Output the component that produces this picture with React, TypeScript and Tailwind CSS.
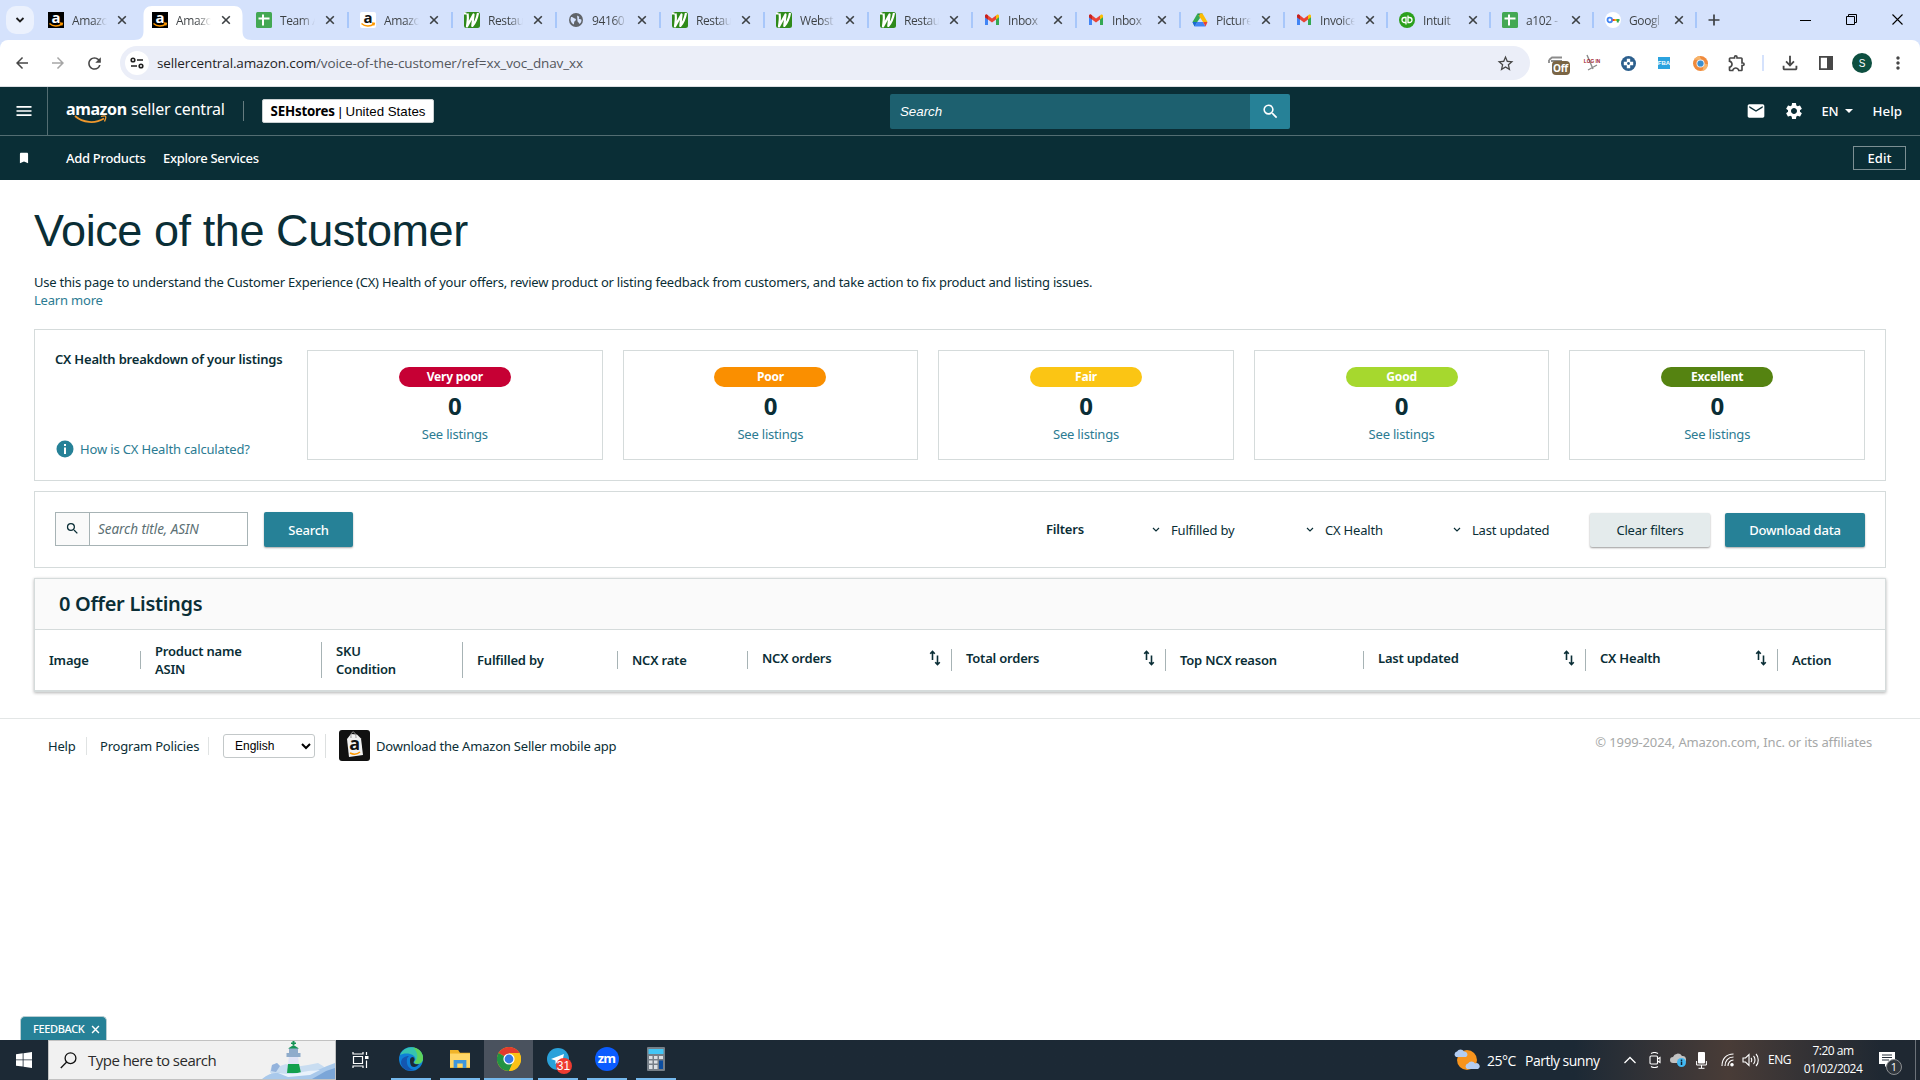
import type { ReactNode } from "react";
import { MdArrowBack, MdArrowForward, MdBookmark, MdEmail, MdMenu, MdMoreVert, MdOutlineExtension, MdOutlineFileDownload, MdRefresh, MdSearch, MdSettings, MdStarBorder } from "react-icons/md";

type TabIcon = "seller" | "amazon" | "sheets" | "web" | "globe" | "gmail" | "drive" | "qb" | "google";

const tabs: { icon: TabIcon; title: string; active?: boolean; narrow?: boolean }[] = [
    { icon: "seller", title: "Amazo" },
    { icon: "seller", title: "Amazo", active: true },
    { icon: "sheets", title: "Team A" },
    { icon: "amazon", title: "Amazo" },
    { icon: "web", title: "Restau" },
    { icon: "globe", title: "94160" },
    { icon: "web", title: "Restau" },
    { icon: "web", title: "Webst" },
    { icon: "web", title: "Restau" },
    { icon: "gmail", title: "Inbox" },
    { icon: "gmail", title: "Inbox" },
    { icon: "drive", title: "Picture" },
    { icon: "gmail", title: "Invoice", narrow: true },
    { icon: "qb", title: "Intuit", narrow: true },
    { icon: "sheets", title: "a102 -", narrow: true },
    { icon: "google", title: "Googl", narrow: true }
];

const ratings = [
    { label: "Very poor", color: "bg-[#c60034]" },
    { label: "Poor", color: "bg-[#fa8f00]" },
    { label: "Fair", color: "bg-[#fbc514]" },
    { label: "Good", color: "bg-[#a6d82e]" },
    { label: "Excellent", color: "bg-[#558311]" }
];

const columns: { lines: string[]; width: string; sort?: boolean }[] = [
    { lines: ["Image"], width: "w-[106px]" },
    { lines: ["Product name", "ASIN"], width: "w-[181px]" },
    { lines: ["SKU", "Condition"], width: "w-[141px]" },
    { lines: ["Fulfilled by"], width: "w-[155px]" },
    { lines: ["NCX rate"], width: "w-[130px]" },
    { lines: ["NCX orders"], width: "w-[204px]", sort: true },
    { lines: ["Total orders"], width: "w-[214px]", sort: true },
    { lines: ["Top NCX reason"], width: "w-[198px]" },
    { lines: ["Last updated"], width: "w-[222px]", sort: true },
    { lines: ["CX Health"], width: "w-[192px]", sort: true },
    { lines: ["Action"], width: "w-[107px]" }
];

function Favicon({ icon }: { icon: TabIcon }) {
    if (icon === "seller" || icon === "amazon") {
        const dark = icon === "seller";
        return (
            <svg viewBox="0 0 16 16" className="size-4 shrink-0">
                <rect width="16" height="16" rx={dark ? 0 : 2} fill={dark ? "#000" : "#fff"} />
                <text x="8" y="10.5" textAnchor="middle" fontSize="15" fontWeight="700" fontFamily="Open Sans, sans-serif" fill={dark ? "#fff" : "#111"}>a</text>
                <path d="M1.500 11.500c3.500 3.200 9 3.200 12.500.3M12 11l2.300.4-.5 2" fill="none" stroke="#f90" strokeWidth="1.500" />
            </svg>
        );
    }
    if (icon === "sheets") {
        return (
            <svg viewBox="0 0 16 16" className="size-4 shrink-0">
                <rect width="16" height="16" rx="1.500" fill="#43a853" />
                <path d="M7 2.500v11M2.500 6.500h11" stroke="#fff" strokeWidth="2" />
            </svg>
        );
    }
    if (icon === "web") {
        return (
            <svg viewBox="0 0 16 16" className="size-4 shrink-0">
                <rect width="16" height="16" rx="2.500" fill="#2f8a1b" />
                <path d="M0 1.500h2.500M3.500 1.500C4.500 6 3.500 10 3 14.500L9.500 2.500 8.300 14C11 11 13 6.500 14 1" fill="none" stroke="#fff" strokeWidth="2.200" strokeLinejoin="round" />
            </svg>
        );
    }
    if (icon === "globe") {
        return (
            <svg viewBox="0 0 16 16" className="size-4 shrink-0">
                <circle cx="8" cy="8" r="7" fill="#5f6368" />
                <path d="M3 5c2-.5 2.500 1 4 1.500s1 2 0 2.500-1 2-1 3.500c-2-.5-3.500-3-3.500-5zM9 2.500c0 1.500 1 1.500 2 2s-1 2 .5 2.500 1.500 0 2 1c0 2-1 3-2 4-.5-2-2-1.500-2-3" fill="#d5e2fc" />
            </svg>
        );
    }
    if (icon === "gmail") {
        return (
            <svg viewBox="0 0 16 16" className="size-4 shrink-0">
                <path d="M1 4v9h3V6.500z" fill="#4285f4" />
                <path d="M15 4v9h-3V6.500z" fill="#34a853" />
                <path d="M12 3.500v4L15 5.200V3.800c0-1.200-1.300-1.800-2.200-1.100z" fill="#fbbc04" />
                <path d="M1 3.800v1.400l3 2.300 4 3 4-3V3.400L8 6.400 3.200 2.700C2.300 2 1 2.600 1 3.800z" fill="#ea4335" />
                <path d="M1 3.800v1.400l3 2.300v-4l-.8-.8C2.300 2 1 2.600 1 3.800z" fill="#c5221f" />
            </svg>
        );
    }
    if (icon === "drive") {
        return (
            <svg viewBox="0 0 16 16" className="size-4 shrink-0">
                <path d="M5.500 1.500h5L8 6z" fill="#188038" />
                <path d="M5.500 1.500L.5 10l2 4L8 6z" fill="#34a853" />
                <path d="M10.500 1.500H8L7 4l4 6h4.500z" fill="#fbbc04" />
                <path d="M2.500 14.500L5 10h6l2.500 4.500z" fill="#4285f4" />
                <path d="M11 10h4.500l-2 4.500z" fill="#ea4335" />
                <path d="M5 10L.5 10l2 4.500z" fill="#1967d2" />
            </svg>
        );
    }
    if (icon === "qb") {
        return (
            <svg viewBox="0 0 16 16" className="size-4 shrink-0">
                <circle cx="8" cy="8" r="8" fill="#2ca01c" />
                <path d="M7 10.500H5.500a2.500 2.500 0 0 1 0-5H7v7M9 5.500h1.500a2.500 2.500 0 0 1 0 5H9v-7" fill="none" stroke="#fff" strokeWidth="1.300" />
            </svg>
        );
    }
    return (
        <svg viewBox="0 0 16 16" className="size-4 shrink-0">
            <circle cx="8" cy="8" r="8" fill="#fff" />
            <circle cx="4.800" cy="8" r="2.300" fill="none" stroke="#4285f4" strokeWidth="1.800" />
            <path d="M7.500 8H11" stroke="#ea4335" strokeWidth="2" />
            <path d="M10 8h4.500M12.800 8v2.500" stroke="#34a853" strokeWidth="2" />
            <path d="M9.500 8h2" stroke="#fbbc04" strokeWidth="2" />
        </svg>
    );
}

function Cross({ className }: { className: string }) {
    return (
        <svg viewBox="0 0 10 10" className={className}>
            <path d="M1.200 1.200l7.600 7.600M8.800 1.200L1.200 8.800" stroke="currentColor" strokeWidth="1.600" />
        </svg>
    );
}

function TabStrip() {
    return (
        <div className="flex h-10 bg-[#d5e2fc]">
            <div className="mt-1.5 ml-1.5 flex h-7 w-7 shrink-0 items-center justify-center rounded-[10px] bg-[#ebf1fd]">
                <svg viewBox="0 0 10 10" className="size-2.5">
                    <path d="M1.500 3L5 6.500 8.500 3" fill="none" stroke="#1f1f1f" strokeWidth="1.800" />
                </svg>
            </div>
            <div className="ml-1.5 flex">
                {tabs.map((tab, index) => (
                    <div key={index} className={`relative flex h-10 items-center pl-2 ${tab.narrow ? "w-[103px]" : "w-[104px]"}`}>
                        {tab.active && (
                            <svg viewBox="0 0 118 34" className="absolute top-1.5 -left-[10px] h-[34px] w-[118px]">
                                <path d="M0 34C7 34 9.500 31 9.500 25V9C9.500 3 13 0 18 0h82c5 0 8.500 3 8.500 9v16c0 6 2.500 9 9.500 9z" fill="#fff" />
                            </svg>
                        )}
                        <div className="relative flex items-center">
                            <Favicon icon={tab.icon} />
                            <span className="mt-px ml-2 w-[35px] bg-linear-to-r from-[#3c4043] from-60% to-transparent bg-clip-text font-['Open_Sans',sans-serif] text-[12px] tracking-[-0.4px] whitespace-pre text-transparent">{tab.title}</span>
                            <Cross className="ml-[10px] size-2.5 text-[#3c4043]" />
                        </div>
                        {index > 1 && <span className="absolute top-3 right-[3px] h-4 w-[2px] bg-[#a8c7fa]" />}
                    </div>
                ))}
            </div>
            <svg viewBox="0 0 12 12" className="mt-[14px] ml-[8px] size-3">
                <path d="M6 .5v11M.5 6h11" stroke="#3c4043" strokeWidth="1.700" />
            </svg>
            <div className="mt-[14px] mr-[17px] ml-auto flex items-center gap-[35px] self-start text-black">
                <svg viewBox="0 0 11 11" className="size-[11px]"><path d="M0 6.500h11" stroke="currentColor" /></svg>
                <svg viewBox="0 0 11 11" className="size-[11px]"><path d="M.5 2.500h8v8h-8zM2.500 2.500v-2h8v8h-2" fill="none" stroke="currentColor" /></svg>
                <svg viewBox="0 0 11 11" className="size-[11px]"><path d="M.5.5l10 10M10.500.5l-10 10" stroke="currentColor" strokeWidth="1.100" /></svg>
            </div>
        </div>
    );
}

function Slot({ children }: { children: ReactNode }) {
    return <div className="flex h-6 w-9 items-center justify-center">{children}</div>;
}

function Toolbar() {
    return (
        <div className="bg-[#d5e2fc]">
            <div className="flex h-[47px] items-center rounded-t-[8px] border-b border-[#dcdfe3] bg-white text-[#474747]">
                <Slot><MdArrowBack className="ml-2 size-[18px]" /></Slot>
                <Slot><MdArrowForward className="ml-2 size-[18px] text-[#a6a6a6]" /></Slot>
                <Slot><MdRefresh className="ml-2 size-[19px]" /></Slot>
                <div className="ml-3 flex h-[34px] w-[1410px] items-center rounded-full bg-[#ebeef8] pr-[15px] pl-[5px]">
                    <div className="flex size-6 items-center justify-center rounded-full bg-white">
                        <svg viewBox="0 0 14 12" className="h-3 w-3.5 text-[#1f1f1f]" fill="none" stroke="currentColor" strokeWidth="1.600">
                            <circle cx="3" cy="3" r="1.800" />
                            <path d="M7 3h6M1 9h6" />
                            <circle cx="11" cy="9" r="1.800" />
                        </svg>
                    </div>
                    <span className="ml-2 font-['Open_Sans',sans-serif] text-[13.5px] tracking-[-0.12px] text-[#1f1f1f]">
                        sellercentral.amazon.com<span className="text-[#54565c]">/voice-of-the-customer/ref=xx_voc_dnav_xx</span>
                    </span>
                    <MdStarBorder className="ml-auto size-[19px]" />
                </div>
                <div className="ml-[8px] flex items-center">
                    <Slot>
                        <div className="relative ml-[3px] h-6 w-6">
                            <svg viewBox="0 0 24 24" className="size-6">
                                <path d="M3 9l3-2.500h10M5 10h11M3 9v3" stroke="#8b8b8b" strokeWidth="1.800" fill="none" />
                            </svg>
                            <span className="absolute top-[10px] left-[6px] flex h-3.5 w-[18px] items-center justify-center rounded-[4px] bg-[#7a6545] font-['Open_Sans',sans-serif] text-[10px] font-bold tracking-tight text-white">Off</span>
                        </div>
                    </Slot>
                    <Slot>
                        <svg viewBox="0 0 18 18" className="size-[18px]">
                            <path d="M4 1l6 14M5 16l9-5" stroke="#8a8a8a" strokeWidth="1.400" />
                            <text x="9" y="9" textAnchor="middle" fontSize="4.8" fontWeight="700" fontFamily="Liberation Sans, sans-serif" fill="#a0202a">LOG IN</text>
                        </svg>
                    </Slot>
                    <Slot>
                        <svg viewBox="0 0 16 16" className="size-[15px]">
                            <circle cx="8" cy="8" r="8" fill="#2c5f8d" />
                            <path d="M6.200 3h3.600v3.200H13v3.600H9.800V13H6.200V9.800H3V6.200h3.200z" fill="#fff" />
                            <circle cx="8" cy="8" r="1.500" fill="#2c5f8d" />
                        </svg>
                    </Slot>
                    <Slot>
                        <div className="flex size-3 items-center justify-center bg-[#2ba3df] font-['Liberation_Sans',sans-serif] text-[6px] font-bold text-white">FBA</div>
                    </Slot>
                    <Slot>
                        <svg viewBox="0 0 16 16" className="size-[15px]">
                            <circle cx="8" cy="8" r="8" fill="#f08a3c" />
                            <path d="M1 4a8 8 0 0 1 6-4l2 4zM10 16a8 8 0 0 0 6-7l-4-1z" fill="#f7b46a" />
                            <circle cx="8" cy="8" r="4.300" fill="#e8eef6" />
                            <circle cx="8" cy="8" r="3.300" fill="#3a8fd0" />
                        </svg>
                    </Slot>
                    <Slot><MdOutlineExtension className="ml-px size-5" /></Slot>
                    <div className="mx-2 h-4 w-0.5 bg-[#d5e2fc]" />
                    <Slot><MdOutlineFileDownload className="size-[22px]" /></Slot>
                    <Slot>
                        <svg viewBox="0 0 16 16" className="size-4">
                            <path d="M1.900 1.900h12.200v12.200H1.900z" fill="none" stroke="currentColor" strokeWidth="1.800" />
                            <path d="M9 2h5v12H9z" fill="currentColor" />
                        </svg>
                    </Slot>
                    <Slot>
                        <div className="flex size-5 items-center justify-center rounded-full bg-[#0d4f40] font-['Liberation_Sans',sans-serif] text-[10px] text-white">S</div>
                    </Slot>
                    <Slot><MdMoreVert className="size-5" /></Slot>
                </div>
            </div>
        </div>
    );
}

function SellerHeader() {
    return (
        <header className="bg-[#0a2e36] font-['Noto_Sans',sans-serif] text-[13px] font-medium text-white">
            <div className="flex h-[49px] items-center border-b border-[#536d72]">
                <div className="flex h-full w-12 items-center justify-center border-r border-[#536d72]">
                    <MdMenu className="size-5" />
                </div>
                <div className="relative ml-[18px] flex h-[26px] w-[160px] items-start text-[16px] leading-[22px] whitespace-nowrap">
                    <span className="w-[65px] font-bold tracking-[-0.4px]">amazon</span>
                    <span className="font-normal tracking-[-0.2px]">seller central</span>
                    <svg viewBox="0 0 36 9" className="absolute top-[17px] left-[8px] h-[9px] w-9">
                        <path d="M1 1c8 7 20 8 29 2.500" fill="none" stroke="#f0982d" strokeWidth="1.800" />
                        <path d="M27 1.500c5-1.500 6-.5 3.500 5" fill="none" stroke="#f0982d" strokeWidth="1.300" />
                    </svg>
                </div>
                <div className="ml-[17px] h-5 w-px bg-[#667c80]" />
                <div className="ml-[18px] flex h-6 w-[172px] items-center justify-center rounded-[2px] border border-[#c9d0d2] bg-white pt-px font-['Liberation_Sans',sans-serif] text-[13.3px] whitespace-pre text-black">
                    <b className="font-['Noto_Sans',sans-serif] text-[13.3px] font-bold tracking-[-0.2px]">SEHstores</b> | United States
                </div>
                <div className="ml-[456px] flex h-[35px] w-[400px]">
                    <div className="flex flex-1 items-center rounded-l-[2px] bg-[#1d606f] pt-px pl-2.5 font-['Liberation_Sans',sans-serif] text-[13.3px] italic">Search</div>
                    <div className="flex w-10 items-center justify-center rounded-r-[2px] bg-[#268197]"><MdSearch className="size-[19px]" /></div>
                </div>
                <div className="mr-[18px] ml-auto flex items-center">
                    <MdEmail className="size-5" />
                    <MdSettings className="ml-[18px] size-5" />
                    <span className="mt-0.5 ml-[18px] w-[19px] tracking-[-0.3px]">EN</span>
                    <svg viewBox="0 0 8 4" className="ml-[4px] h-1 w-2"><path d="M0 0h8L4 4z" fill="currentColor" /></svg>
                    <span className="mt-0.5 ml-[20px] text-[13.3px]">Help</span>
                </div>
            </div>
            <div className="flex h-[44px] items-center">
                <MdBookmark className="ml-[17px] size-3.5" />
                <span className="mt-0.5 ml-[35px] w-[97px] tracking-[-0.3px]">Add Products</span>
                <span className="mt-0.5 tracking-[-0.3px]">Explore Services</span>
                <div className="mr-3.5 ml-auto flex h-6 w-[53px] items-center justify-center border border-[#7c8f93] pt-0.5">Edit</div>
            </div>
        </header>
    );
}

function FilterItem({ label, width }: { label: string; width: string }) {
    return (
        <div className={`flex items-center ${width}`}>
            <svg viewBox="0 0 8 6" className="h-1.5 w-2"><path d="M1 1l3 3 3-3" fill="none" stroke="#0a2e36" strokeWidth="1.200" /></svg>
            <span className="ml-[11px]">{label}</span>
        </div>
    );
}

function SortIcon() {
    return (
        <svg viewBox="0 0 12 16" className="h-4 w-3 shrink-0" fill="none" stroke="#0a2e36" strokeWidth="1.600">
            <path d="M3.500 10V2M1.200 3.800l2.300-2.300 2.300 2.300M8.500 5.500v9M6.200 12.200l2.300 2.300 2.300-2.300" />
        </svg>
    );
}

function VoiceOfCustomer() {
    return (
        <main className="px-[34px] pt-[27px] font-['Noto_Sans',sans-serif] text-[13px] leading-[18px] tracking-[-0.2px] text-[#0a2e36]">
            <h1 className="font-['Liberation_Sans',sans-serif] text-[45px] leading-[48px] tracking-[-0.43px]">Voice of the Customer</h1>
            <p className="mt-[18px] tracking-[-0.223px]">Use this page to understand the Customer Experience (CX) Health of your offers, review product or listing feedback from customers, and take action to fix product and listing issues.</p>
            <p className="text-[#2b7b92]">Learn more</p>

            <section className="mt-5 flex h-[152px] border border-[#d5dbdb] pt-5 pr-5 pl-5">
                <div className="flex h-[110px] w-[252px] flex-col justify-between">
                    <h2 className="font-semibold">CX Health breakdown of your listings</h2>
                    <div className="mb-[2px] flex items-center text-[#2b7b92]">
                        <svg viewBox="0 0 18 18" className="ml-[1px] size-[18px]">
                            <circle cx="9" cy="9" r="8.500" fill="#268197" />
                            <path d="M9 4v2M9 7.500V14" stroke="#fff" strokeWidth="2" />
                        </svg>
                        <span className="ml-[6px] tracking-[-0.16px]">How is CX Health calculated?</span>
                    </div>
                </div>
                <div className="grid flex-1 grid-cols-5 gap-5">
                    {ratings.map((rating) => (
                        <div key={rating.label} className="flex h-[110px] flex-col items-center border border-[#d5dbdb] pt-4">
                            <span className={`flex h-5 w-28 items-center justify-center rounded-full text-[12px] font-bold text-white ${rating.color}`}>{rating.label}</span>
                            <span className="mt-[5px] text-[24px] leading-7 font-bold">0</span>
                            <span className="mt-[5px] text-[#2b7b92]">See listings</span>
                        </div>
                    ))}
                </div>
            </section>

            <section className="mt-[10px] flex h-[77px] items-start border border-[#d5dbdb] px-5 pt-5">
                <div className="flex h-[34px] w-[193px] border border-[#a7b3b5]">
                    <div className="flex w-[34px] items-center justify-center border-r border-[#a7b3b5] bg-[#fafafa]"><MdSearch className="mb-0.5 size-[15px]" /></div>
                    <span className="flex items-center pl-2 text-[13.5px] tracking-[-0.05px] text-[#5b6f73] italic">Search title, ASIN</span>
                </div>
                <div className="ml-4 flex h-[35px] w-[89px] items-center justify-center rounded-[2px] bg-[#268197] font-medium text-white shadow-[0_1px_2px_rgba(0,0,0,0.35)]">Search</div>
                <div className="ml-auto flex h-9 items-center">
                    <span className="mb-[3px] w-[106px] font-semibold">Filters</span>
                    <FilterItem label="Fulfilled by" width="w-[154px]" />
                    <FilterItem label="CX Health" width="w-[147px]" />
                    <FilterItem label="Last updated" width="w-[137px]" />
                    <div className="flex h-[34px] w-[120px] items-center justify-center rounded-[2px] bg-[#e4ebec] shadow-[0_1px_2px_rgba(0,0,0,0.4)]">Clear filters</div>
                    <div className="ml-[15px] flex h-[34px] w-[140px] items-center justify-center rounded-[2px] bg-[#268197] font-medium text-white shadow-[0_1px_2px_rgba(0,0,0,0.35)]">Download data</div>
                </div>
            </section>

            <section className="mt-[10px] border border-b-2 border-[#d5dbdb] shadow-[0_1px_3px_rgba(0,0,0,0.3)]">
                <h2 className="flex h-[51px] items-center border-b border-[#d5dbdb] bg-[#fafafa] pl-6 text-[20px] font-semibold tracking-[-0.3px]">0 Offer Listings</h2>
                <div className="flex h-[60px] items-center pb-px font-semibold">
                    {columns.map((column, index) => (
                        <div key={column.lines[0]} className={`flex shrink-0 items-center pl-[14px] ${column.width} ${column.sort ? "h-[22px] pr-[10px]" : ""} ${index < columns.length - 1 ? "border-r border-[#a7b3b5]" : ""}`}>
                            <div className={column.sort ? "pb-1" : ""}>
                                {column.lines.map((line) => <div key={line}>{line}</div>)}
                            </div>
                            {column.sort && <div className="ml-auto pb-1"><SortIcon /></div>}
                        </div>
                    ))}
                </div>
            </section>
        </main>
    );
}

function Footer() {
    return (
        <footer className="mt-[26px] flex h-[60px] items-start border-t border-[#e3e6e6] pr-12 pl-12 font-['Noto_Sans',sans-serif] text-[13px] leading-[18px] tracking-[-0.2px] text-[#0a2e36]">
            <div className="flex h-[53px] items-center">
                <span className="w-[38px]">Help</span>
                <span className="flex h-[18px] w-[123px] items-center border-x border-[#e0e3e3] pl-[13px]">Program Policies</span>
                <select className="ml-[14px] h-6 w-[92px] rounded-[3px] border border-[#c3c8c9] bg-white pl-[7px] font-['Liberation_Sans',sans-serif] text-[12px] tracking-normal text-black">
                    <option>English</option>
                </select>
                <span className="ml-[10px] h-6 w-px bg-[#dde0e0]" />
                <svg viewBox="0 0 31 31" className="ml-[13px] size-[31px]">
                    <rect width="31" height="31" rx="3" fill="#111" />
                    <path d="M8 9l4-5 6 .5 4 4L24 25 10 27z" fill="#f2f2f2" />
                    <path d="M12 8c-1-8 5-8 5 0" fill="none" stroke="#999" />
                    <text x="15.500" y="20" textAnchor="middle" fontSize="18" fontWeight="700" fontFamily="Open Sans, sans-serif" fill="#111">a</text>
                    <path d="M11 23c4 2 7 1.500 10-1" fill="none" stroke="#f90" strokeWidth="1.500" />
                </svg>
                <span className="ml-[6px]">Download the Amazon Seller mobile app</span>
            </div>
            <span className="mt-[14px] ml-auto tracking-[-0.13px] text-[#a6a8a8]">© 1999-2024, Amazon.com, Inc. or its affiliates</span>
        </footer>
    );
}

function TaskApp({ children, bar, active }: { children: ReactNode; bar: string; active?: boolean }) {
    return (
        <div className={`flex h-10 w-[49px] flex-col items-center justify-between ${active ? "bg-[#4a525e]" : ""}`}>
            <div className="flex h-[38px] items-center">{children}</div>
            <div className={`h-0.5 bg-[#76b9ed] ${bar}`} />
        </div>
    );
}

function Taskbar() {
    return (
        <div className="flex h-10 items-center bg-linear-to-r from-[#1c2935] from-82% via-[#493c37] via-90% to-[#1f2832] to-98% font-['Open_Sans',sans-serif] text-white">
            <div className="flex h-10 w-12 items-center justify-center">
                <svg viewBox="0 0 16 16" className="size-4"><path d="M0 2.200L6.700 1.300v6.200H0zM7.500 1.200L16 0v7.500H7.500zM0 8.300h6.700v6.300L0 13.700zM7.500 8.300H16V16l-8.500-1.200z" fill="#fff" /></svg>
            </div>
            <div className="flex h-10 w-[288px] items-center border border-[#c2c2c2] bg-[#f1f1f1] pl-[11px] text-[#2b2b2b]">
                <svg viewBox="0 0 17 17" className="size-[17px]" fill="none" stroke="#111" strokeWidth="1.300"><circle cx="10.500" cy="6.200" r="5.400" /><path d="M6.700 10L.8 16" /></svg>
                <span className="ml-[11px] text-[15px] tracking-[-0.52px]">Type here to search</span>
                <svg viewBox="0 0 73 38" className="ml-auto h-[38px] w-[73px]">
                    <path d="M8 31l2-7 5-2 3 3 6-2 8 3 14-2 10-2 5 3 4 4-8 5H10z" fill="#c9ddf1" />
                    <path d="M10 24l5-2 3 3-4 6-5-1z" fill="#94b3dc" />
                    <path d="M27 15h9l2 17H25z" fill="#dfe3f5" />
                    <path d="M26 23h11l2 9H25z" fill="#11a04e" />
                    <path d="M24.500 12h14v4h-14zM27 7h9v5h-9z" fill="#8faccb" />
                    <path d="M26 7.500l5.500-3.500 5.500 3.500zM30.500 0h2v4h-2zM29 1.500h5v1.500h-5z" fill="#149354" />
                    <path d="M0 38c6-5 12-7 19-6l10 1 14-2 13-2 9-4 8-3v16z" fill="#a9c9eb" />
                    <path d="M16 32l14 1 16-3 12-1-10 5-22 2z" fill="#e9f2fb" />
                    <path d="M50 38l14-8 9-3v11z" fill="#7ba6d8" />
                </svg>
            </div>
            <svg viewBox="0 0 17 16" className="mr-[17px] ml-4 h-4 w-[17px]" fill="none" stroke="#fff" strokeWidth="1.200">
                <path d="M1.500 4.500h9v7h-9zM1 0v2h10V0M1 16v-2h10v2M14.500 0v3M14.500 8.500V16" />
                <path d="M13 4h3.500v3H13z" fill="#fff" stroke="none" />
            </svg>
            <TaskApp bar="w-10">
                <svg viewBox="0 0 24 24" className="size-6">
                    <circle cx="12" cy="12" r="12" fill="#0f7fd6" />
                    <path d="M1 8C4 1 12-2 18 2c6 3 8 10 4 14-3 2-7 1-7-1 3-3 1-7-4-8C7 6 3 7 1 8z" fill="#36c3b0" />
                    <path d="M14 .3c7 1 11 7 9.800 12.700-1 4-6 5-8.800 2.500C20 12 19 5 14 .3z" fill="#5ed35c" />
                    <path d="M8 12c-1 6 2 10 7 11-6 2-12-1-13-7 0-5 4-7 8-7-1 1-2 2-2 3z" fill="#1456b0" />
                    <path d="M11 13c0-2 1.500-3 3-3 1.500 1 2 2.500 1 4-1.500 2.500 1 4 5 3-2 3-5 3.500-7 2.500-1.500-1-2-3.500-2-6.500z" fill="#1c2935" />
                </svg>
            </TaskApp>
            <TaskApp bar="w-10">
                <svg viewBox="0 0 24 22" className="h-[20px] w-[22px]">
                    <path d="M1 1h9l2 3h11v17H1z" fill="#f0b429" />
                    <path d="M1 5h22v15H1z" fill="#ffd667" />
                    <path d="M5 21v-9h14v9h-4v-5H9v5z" fill="#3f96dc" />
                </svg>
            </TaskApp>
            <TaskApp bar="w-[49px]" active>
                <svg viewBox="0 0 24 24" className="size-6">
                    <circle cx="12" cy="12" r="12" fill="#fbc116" />
                    <path d="M12 12L1.600 6A12 12 0 0 1 22.400 6z" fill="#e33b2e" />
                    <path d="M12 12L1.600 6A12 12 0 0 0 12 24l5.200-9z" fill="#229342" />
                    <path d="M12 12h5.200L12 24a12 12 0 0 0 10.400-18H12z" fill="#fbc116" />
                    <circle cx="12" cy="12" r="5.600" fill="#fff" />
                    <circle cx="12" cy="12" r="4.400" fill="#3578e5" />
                </svg>
            </TaskApp>
            <TaskApp bar="w-10">
                <div className="relative">
                    <svg viewBox="0 0 22 22" className="size-[22px]">
                        <circle cx="11" cy="11" r="11" fill="#2aa1da" />
                        <path d="M4 11l13-5-2.500 11-4-3-2 2v-3.500z" fill="#fff" />
                    </svg>
                    <span className="absolute top-2.5 left-[9px] flex size-4 items-center justify-center rounded-full bg-[#ee3b31] font-['Liberation_Sans',sans-serif] text-[12px]">31</span>
                </div>
            </TaskApp>
            <TaskApp bar="w-10">
                <div className="flex size-6 items-center justify-center rounded-full bg-[#0b5cff] pb-0.5 text-[13px] leading-none font-bold tracking-[-0.8px]">zm</div>
            </TaskApp>
            <TaskApp bar="w-10">
                <svg viewBox="0 0 18 24" className="h-6 w-[18px]">
                    <rect width="18" height="24" rx="1" fill="#767f88" />
                    <path d="M1.500 2h15v5h-15z" fill="#43c6f5" />
                    <path d="M2 9h3.500v3H2zM7 9h3.500v3H7zM12 9h4v3h-4zM2 13.500h3.500v3H2zM7 13.500h3.500v3H7zM2 18h3.500v4H2zM7 18h3.500v4H7z" fill="#dbe0e4" />
                    <path d="M12 13.500h4V22h-4z" fill="#0d4ea0" />
                </svg>
            </TaskApp>
            <div className="ml-auto flex h-10 items-center">
                <svg viewBox="0 0 26 24" className="h-6 w-[26px]">
                    <circle cx="13" cy="12" r="10" fill="#f7941d" />
                    <path d="M2 9a3 3 0 0 1 1-5.500 4 4 0 0 1 7 0A3 3 0 0 1 12 9zM13 21a3 3 0 0 1 1-5.500 4 4 0 0 1 7 0 3 3 0 0 1 3 5.500z" fill="#b4cdf1" />
                </svg>
                <span className="ml-[7px] w-[38px] text-[14px] tracking-[-0.5px]">25°C</span>
                <span className="w-[99px] text-[14px] tracking-[-0.5px]">Partly sunny</span>
                <svg viewBox="0 0 12 8" className="h-2 w-3"><path d="M.5 7L6 1.500 11.500 7" fill="none" stroke="#fff" strokeWidth="1.300" /></svg>
                <svg viewBox="0 0 12 16" className="ml-[13px] h-4 w-3" fill="none" stroke="#fff" strokeWidth="1.100">
                    <rect x="1" y="4" width="7.500" height="8" rx="1" />
                    <path d="M8.500 7L11 5.500v5L8.500 9M2 1.500c2-1.200 5-1.200 7 0M2 14.500c2 1.200 5 1.200 7 0" />
                </svg>
                <svg viewBox="0 0 17 14" className="ml-[9px] h-3.5 w-[17px]">
                    <path d="M3 10a3 3 0 0 1 0-6 5 5 0 0 1 9-1 3 3 0 0 1 1 7z" fill="#c2c2c2" />
                    <circle cx="11.500" cy="9.500" r="4.500" fill="#42b8f2" />
                    <path d="M11.500 6.500V8M11.500 8.500V12" stroke="#123" strokeWidth="1.500" />
                </svg>
                <svg viewBox="0 0 11 17" className="ml-[9px] h-[17px] w-[11px]">
                    <rect x="2" y="0" width="7" height="11.500" rx="1" fill="#fff" />
                    <path d="M.6 9v4h9.800V9M5.500 13v3M2.500 16.300h6" fill="none" stroke="#fff" />
                </svg>
                <svg viewBox="0 0 13 14" className="ml-[14px] h-3.5 w-[13px]" fill="none" stroke="#fff" strokeWidth="1.100">
                    <path d="M1 13C1 6 5 1 12.500 1M4 13c0-5 3-9 8.500-9M7 13c0-3 2-6 5.500-6" />
                    <circle cx="11" cy="11.800" r="1.200" fill="#fff" />
                </svg>
                <svg viewBox="0 0 17 14" className="ml-2 h-3.5 w-[17px]" fill="none" stroke="#fff" strokeWidth="1.100">
                    <path d="M1 5h2.500L7 1.500v11L3.500 9H1zM9 5c1 1 1 3 0 4M11.500 3c2 2 2 6 0 8M14 1c3 3 3 9 0 12" />
                </svg>
                <span className="ml-[9px] w-[23px] text-[12px] tracking-[-0.5px]">ENG</span>
                <div className="ml-3 w-[60px] text-center text-[12px] leading-[18px] tracking-[-0.5px]">
                    <div>7:20 am</div>
                    <div>01/02/2024</div>
                </div>
                <div className="relative ml-[16px] h-6 w-9">
                    <svg viewBox="0 0 16 16" className="mt-1 size-4">
                        <path d="M0 0h16v12H9l-3 3v-3H0z" fill="#fff" />
                        <path d="M3 3h10M3 5.500h10M3 8h7" stroke="#26303a" />
                    </svg>
                    <span className="absolute top-[11px] left-[7px] flex size-4 items-center justify-center rounded-full border border-[#8c8f92] bg-[#30363d] text-[11px]">1</span>
                </div>
                <div className="mr-1 h-10 w-px bg-[#6c7279]" />
            </div>
        </div>
    );
}

export default function App() {
    return (
        <div className="flex h-[1080px] w-[1920px] flex-col overflow-hidden bg-white">
            <TabStrip />
            <Toolbar />
            <SellerHeader />
            <VoiceOfCustomer />
            <Footer />
            <div className="mt-auto ml-5 flex h-6 w-[87px] items-center rounded-t-[5px] border border-b-0 border-[#b9cdd2] bg-[#268197] pt-px pl-3 font-['Noto_Sans',sans-serif] text-[11px] font-medium tracking-[-0.35px] text-white">
                <span className="w-[58px]">FEEDBACK</span>
                <Cross className="size-[9px]" />
            </div>
            <Taskbar />
        </div>
    );
}
